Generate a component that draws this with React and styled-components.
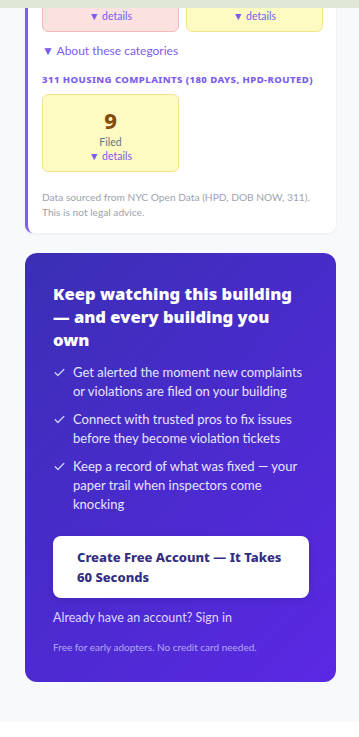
import React from 'react';
import styled, { createGlobalStyle } from 'styled-components';

const GlobalStyle = createGlobalStyle`
  html, body {
    margin: 0;
    padding: 0;
    background: #ffffff;
  }
  body {
    font-family: Lato, 'Noto Sans', sans-serif;
    overflow: hidden;
  }
`;

const topStats = [
  { id: 1, value: '2', label: 'Open', tone: 'red' },
  { id: 2, value: '5', label: 'Closed', tone: 'yellow' },
];

const complaintStats = [{ id: 3, value: '9', label: 'Filed', tone: 'yellow' }];

const perks = [
  'Get alerted the moment new complaints or violations are filed on your building',
  'Connect with trusted pros to fix issues before they become violation tickets',
  'Keep a record of what was fixed — your paper trail when inspectors come knocking',
];

const CheckIcon = () => (
  <svg width="13" height="13" viewBox="0 0 24 24" fill="none" stroke="currentColor" strokeWidth="2.4" strokeLinecap="round" strokeLinejoin="round">
    <path d="M4 12.5l5 5L20 6.5" />
  </svg>
);

const App = () => {
  const renderStats = list =>
    list.map(({ id, value, label, tone }) => (
      <StatBox key={id} tone={tone}>
        <StatValue>{value}</StatValue>
        <StatLabel>{label}</StatLabel>
        <Details>▼ details</Details>
      </StatBox>
    ));

  return (
    <>
      <GlobalStyle />
      <Page>
        <TopStrip />
        <Main>
          <ReportCard>
            <SectionTitle>HPD Violations (open)</SectionTitle>
            <StatGrid>{renderStats(topStats)}</StatGrid>
            <Toggle>▼ About these categories</Toggle>
            <SectionTitle spaced>311 Housing Complaints (180 days, HPD-routed)</SectionTitle>
            <StatGrid>{renderStats(complaintStats)}</StatGrid>
            <Footnote>
              Data sourced from NYC Open Data (HPD, DOB NOW, 311).
              <br />
              This is not legal advice.
            </Footnote>
          </ReportCard>

          <CtaCard>
            <CtaHeading>Keep watching this building — and every building you own</CtaHeading>
            <PerkList>
              {perks.map(text => (
                <Perk key={text}>
                  <CheckMark>
                    <CheckIcon />
                  </CheckMark>
                  <PerkText>{text}</PerkText>
                </Perk>
              ))}
            </PerkList>
            <CtaButton type="button">Create Free Account — It Takes 60 Seconds</CtaButton>
            <SignIn>Already have an account? Sign in</SignIn>
            <FinePrint>Free for early adopters. No credit card needed.</FinePrint>
          </CtaCard>
        </Main>
      </Page>
    </>
  );
};

const Page = styled.div`
  background: #f8f9fb;
  padding-bottom: 40px;
  overflow: hidden;
`;

const TopStrip = styled.div`
  position: relative;
  z-index: 2;
  height: 8px;
  background: #e1e7d7;
`;

const Main = styled.main`
  display: flex;
  flex-direction: column;
  gap: 20px;
  padding: 0 23px 0 25px;
`;

const ReportCard = styled.section`
  margin-top: -94px;
  background: #ffffff;
  border-left: 3px solid #7c5cfa;
  border-radius: 8px;
  box-shadow: 0 1px 3px rgba(15, 23, 42, 0.06);
  padding: 16px 13px 13px 14px;
  display: flex;
  flex-direction: column;
`;

const SectionTitle = styled.h3`
  margin: ${p => (p.spaced ? '14px 0 7px' : '0 0 10px')};
  font-family: 'Noto Sans', sans-serif;
  font-size: 9.6px;
  line-height: 14px;
  font-weight: 800;
  letter-spacing: 0.4px;
  text-transform: uppercase;
  color: #7c5cf0;
`;

const StatGrid = styled.div`
  display: grid;
  grid-template-columns: 137px 137px;
  gap: 7px;
`;

const StatBox = styled.div`
  display: flex;
  flex-direction: column;
  align-items: center;
  height: 78px;
  box-sizing: border-box;
  padding-top: 11px;
  border-radius: 6px;
  border: 1px solid ${p => (p.tone === 'red' ? '#f6b9b9' : '#f3e38a')};
  background: ${p => (p.tone === 'red' ? '#fce1e1' : '#fdfbc2')};
`;

const StatValue = styled.div`
  font-family: 'Noto Sans', sans-serif;
  font-size: 22px;
  line-height: 28px;
  font-weight: 800;
  color: #854d0e;
`;

const StatLabel = styled.div`
  margin-top: 1px;
  font-size: 10.5px;
  line-height: 14px;
  color: #6b7280;
`;

const Details = styled.div`
  font-size: 10.5px;
  line-height: 14px;
  color: #7c5cf0;
`;

const Toggle = styled.div`
  margin-top: 11px;
  font-size: 12px;
  line-height: 16px;
  color: #7c5cf0;
`;

const Footnote = styled.p`
  margin: 18px 0 0;
  font-size: 10.2px;
  line-height: 15px;
  color: #9ca3af;
`;

const CtaCard = styled.section`
  border-radius: 12px;
  background: linear-gradient(135deg, #3a2fb4 0%, #4a2bcd 50%, #5b28e3 100%);
  padding: 29px 27px 27px 28px;
  display: flex;
  flex-direction: column;
  align-items: stretch;
`;

const CtaHeading = styled.h2`
  margin: 0;
  font-family: 'Noto Sans', sans-serif;
  font-size: 16.6px;
  line-height: 23px;
  font-weight: 900;
  color: #ffffff;
`;

const PerkList = styled.ul`
  list-style: none;
  margin: 12px 0 0;
  padding: 0;
  display: flex;
  flex-direction: column;
  gap: 9px;
`;

const Perk = styled.li`
  display: flex;
  gap: 7px;
  font-size: 13px;
  line-height: 19px;
  color: #e6e4ff;
`;

const PerkText = styled.span`
  flex: 1;
  min-width: 0;
`;

const CheckMark = styled.span`
  flex: none;
  width: 13px;
  height: 19px;
  display: flex;
  align-items: center;
  color: #c7d2fe;
`;

const CtaButton = styled.button`
  margin-top: 22px;
  padding: 11px 24px;
  border: none;
  border-radius: 8px;
  background: #ffffff;
  box-shadow: 0 2px 6px rgba(30, 20, 90, 0.2);
  text-align: left;
  font-family: 'Noto Sans', sans-serif;
  font-size: 13px;
  line-height: 20px;
  font-weight: 800;
  color: #312e81;
`;

const SignIn = styled.div`
  margin-top: 11px;
  font-size: 12.5px;
  line-height: 18px;
  color: #dcd6ff;
`;

const FinePrint = styled.div`
  margin-top: 13px;
  font-size: 10px;
  line-height: 15px;
  color: #b3a9f5;
`;

export default App;
